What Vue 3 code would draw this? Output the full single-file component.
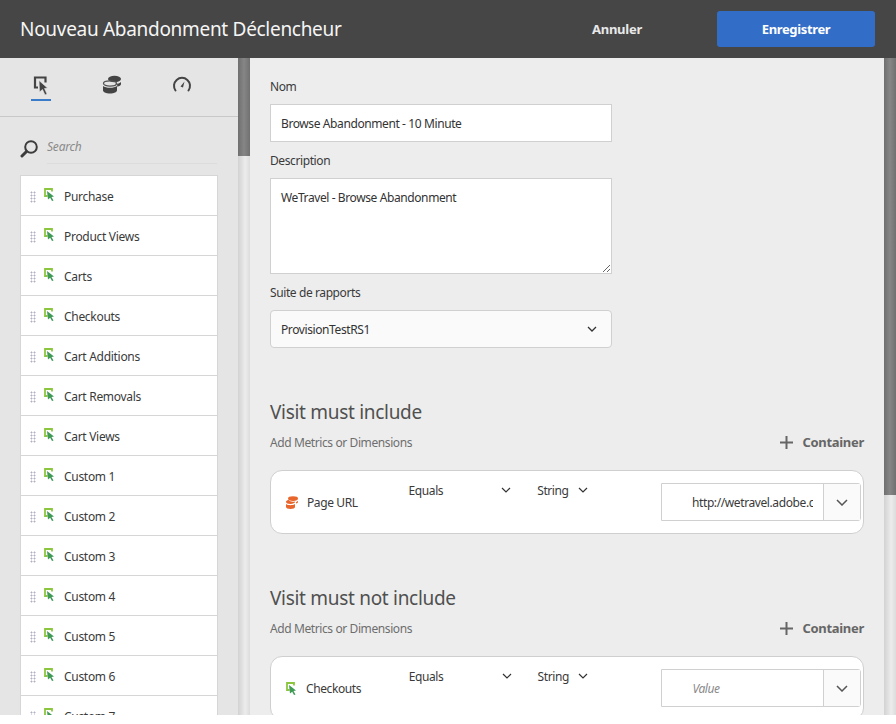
<template>
  <div class="page">
    <header class="topbar">
      <div class="title">Nouveau Abandonment Déclencheur</div>
      <button class="cancel">Annuler</button>
      <button class="save">Enregistrer</button>
    </header>

    <div class="body">
      <aside class="sidebar">
        <div class="tabs">
          <div class="tab active">
            <svg width="20" height="21" viewBox="0 0 20 21">
              <path d="M7 12.500H4V2.500h10.500v5" fill="none" stroke="#444" stroke-width="2.200" />
              <path d="M8 5.500l8.500 7.500-3 .5 2.500 5.500-2 1-2.500-5.500-3 2.500z" fill="#444" stroke="#e5e5e5" stroke-width=".6" />
            </svg>
          </div>
          <div class="tab">
            <svg width="20" height="19" viewBox="0 0 20 19">
              <ellipse cx="12.500" cy="4" rx="6.500" ry="3.200" fill="#444" />
              <path d="M13 8.800c2.700 0 5-.7 6-1.900V9c0 1.300-1.700 2.300-3.800 2.700V9.500z" fill="#444" />
              <ellipse cx="8" cy="8.500" rx="6.500" ry="2.600" fill="none" stroke="#555" stroke-width="1.300" />
              <path d="M1 11c1.500 1.200 4 1.800 7 1.800s5.500-.6 7-1.800v4.200c0 1.900-3 3.300-7 3.300s-7-1.400-7-3.300z" fill="#444" />
            </svg>
          </div>
          <div class="tab">
            <svg width="20" height="18" viewBox="0 0 20 18">
              <path d="M3.500 15.500a8 8 0 1 1 13 0" fill="none" stroke="#444" stroke-width="2" stroke-linecap="round" />
              <path d="M8.500 11.500l4-5-1.500 6z" fill="#444" />
            </svg>
          </div>
        </div>

        <div class="search">
          <svg class="search-icon" width="19" height="19" viewBox="0 0 19 19">
            <circle cx="11" cy="8" r="5.800" fill="none" stroke="#3c3c3c" stroke-width="2" />
            <path d="M6.500 12.500L2 17" stroke="#3c3c3c" stroke-width="3" stroke-linecap="round" />
          </svg>
          <div class="search-field">Search</div>
        </div>

        <ul class="metric-list">
          <li v-for="item in metrics" :key="item" class="metric">
            <span class="grip"></span>
            <svg class="metric-icon" width="11" height="13" viewBox="0 0 11 13">
              <path d="M3.500 8H1V1h7v2.500" fill="none" stroke="#8cc63f" stroke-width="1.800" />
              <path d="M3 3l7 5.500-2.500.5 2 3.500-1.500.5-1.800-3.300L4 11.500z" fill="#3f9a55" />
            </svg>
            <span>{{ item }}</span>
          </li>
        </ul>
      </aside>

      <div class="scrollbar side-scroll"><div class="thumb"></div></div>

      <main class="content">
        <label class="field-label">Nom</label>
        <input class="field" value="Browse Abandonment - 10 Minute" />
        <label class="field-label">Description</label>
        <textarea class="field area">WeTravel - Browse Abandonment</textarea>
        <label class="field-label">Suite de rapports</label>
        <div class="field picker">
          <span>ProvisionTestRS1</span>
          <svg width="10" height="6" viewBox="0 0 10 6"><path d="M1 1l4 4 4-4" fill="none" stroke="#333" stroke-width="1.300" /></svg>
        </div>

        <section v-for="block in blocks" :key="block.title" class="rule">
          <h2>{{ block.title }}</h2>
          <div class="rule-sub">
            <span>Add Metrics or Dimensions</span>
            <span class="add-container">
              <svg width="13" height="13" viewBox="0 0 13 13"><path d="M6.500 0v13M0 6.500h13" stroke="#666" stroke-width="2" /></svg>
              Container
            </span>
          </div>
          <div class="rule-card">
            <div class="rule-name">
              <svg v-if="block.kind === 'dimension'" class="rule-icon" width="12" height="13" viewBox="0 0 12 13">
                <ellipse cx="7" cy="2.600" rx="5" ry="2.400" fill="#e8662c" />
                <path d="M0 6c0-1 1-1.800 2.500-2.300.8 1.200 2.500 2 4.500 2 .6 0 1.200-.1 1.700-.2.200.2.300.4.300.6C9 7.100 7 8 4.500 8S0 7.100 0 6z" fill="#e8662c" />
                <path d="M0 8c1 .8 2.700 1.200 4.500 1.200S8 8.800 9 8v3c0 1.100-2 2-4.500 2S0 12.100 0 11z" fill="#e8662c" />
                <path d="M10 7.600c1.200-.3 2-.8 2-1.600V4.800c-.5.700-1.200 1.100-2 1.400z" fill="#e8662c" />
              </svg>
              <svg v-else class="rule-icon" width="11" height="13" viewBox="0 0 11 13">
                <path d="M3.500 8H1V1h7v2.500" fill="none" stroke="#8cc63f" stroke-width="1.800" />
                <path d="M3 3l7 5.500-2.500.5 2 3.500-1.500.5-1.800-3.300L4 11.500z" fill="#3f9a55" />
              </svg>
              <span>{{ block.name }}</span>
            </div>
            <div class="rule-op op-equals">
              <span>Equals</span>
              <svg width="10" height="6" viewBox="0 0 10 6"><path d="M1 1l4 4 4-4" fill="none" stroke="#333" stroke-width="1.200" /></svg>
            </div>
            <div class="rule-op op-string">
              <span>String</span>
              <svg width="10" height="6" viewBox="0 0 10 6"><path d="M1 1l4 4 4-4" fill="none" stroke="#333" stroke-width="1.200" /></svg>
            </div>
            <div class="combo">
              <div class="combo-value" :class="{ placeholder: !block.value }">{{ block.value || 'Value' }}</div>
              <div class="combo-btn">
                <svg width="12" height="7" viewBox="0 0 12 7"><path d="M1 1l5 5 5-5" fill="none" stroke="#555" stroke-width="1.500" /></svg>
              </div>
            </div>
          </div>
        </section>
      </main>

      <div class="scrollbar main-scroll"><div class="thumb"></div></div>
    </div>
  </div>
</template>

<script setup>
const metrics = [
  'Purchase',
  'Product Views',
  'Carts',
  'Checkouts',
  'Cart Additions',
  'Cart Removals',
  'Cart Views',
  'Custom 1',
  'Custom 2',
  'Custom 3',
  'Custom 4',
  'Custom 5',
  'Custom 6',
  'Custom 7'
]

const blocks = [
  { title: 'Visit must include', kind: 'dimension', name: 'Page URL', value: 'http://wetravel.adobe.com' },
  { title: 'Visit must not include', kind: 'metric', name: 'Checkouts', value: '' }
]
</script>

<style>
html,
body {
  background: #fff;
}
</style>

<style scoped>
.page {
  height: 715px;
  display: flex;
  flex-direction: column;
  overflow: hidden;
  font-family: "Noto Sans", "Open Sans", sans-serif;
  font-size: 12px;
  letter-spacing: -0.4px;
  color: #3a3a3a;
}

.topbar {
  height: 58px;
  flex: none;
  display: flex;
  align-items: center;
  background: #464646;
  padding: 0 21px 0 20px;
}

.title {
  flex: 1;
  font-size: 19px;
  letter-spacing: -0.3px;
  color: #f5f5f5;
}

.cancel {
  background: none;
  border: none;
  font: inherit;
  font-weight: 700;
  font-size: 13px;
  letter-spacing: -0.25px;
  color: #e8e8e8;
  margin-right: 75px;
  padding: 0;
}

.save {
  width: 158px;
  height: 36px;
  background: #326ec8;
  border: none;
  border-radius: 3px;
  font: inherit;
  font-weight: 700;
  font-size: 13px;
  letter-spacing: -0.35px;
  color: #fff;
  padding: 0;
}

.body {
  flex: 1;
  min-height: 0;
  display: flex;
}

.sidebar {
  width: 238px;
  flex: none;
  background: #e5e5e5;
  overflow: hidden;
}

.tabs {
  height: 59px;
  display: flex;
  justify-content: space-between;
  padding: 17px 46px 0 31px;
  box-sizing: border-box;
  border-bottom: 1px solid #c8c8c8;
}

.tab {
  width: 20px;
  height: 24px;
  display: flex;
  justify-content: center;
  align-items: flex-start;
  border-bottom: 2px solid transparent;
}

.tab.active {
  border-bottom-color: #3a7cc9;
}

.search {
  display: flex;
  align-items: center;
  gap: 8px;
  margin: 16px 21px 11px 20px;
}

.search-field {
  flex: 1;
  height: 30px;
  line-height: 28px;
  border-bottom: 1px solid #dcdcdc;
  font-style: italic;
  letter-spacing: -0.2px;
  color: #8a8a8a;
}

.metric-list {
  list-style: none;
  margin: 0 20px 0 20px;
  padding: 0;
  background: #fff;
  border: 1px solid #d6d6d6;
  letter-spacing: -0.3px;
}

.metric {
  height: 39px;
  box-sizing: content-box;
  display: flex;
  align-items: center;
  border-bottom: 1px solid #d6d6d6;
  color: #3a3a3a;
}

.metric > span:last-child {
  margin-top: 2px;
}

.grip {
  width: 6px;
  height: 12px;
  margin-top: 2px;
  margin-left: 9px;
  margin-right: 8px;
  background-image: radial-gradient(circle, #b0b0c4 0.9px, transparent 1.1px);
  background-size: 3px 3px;
}

.metric-icon {
  margin-right: 9px;
  margin-top: -3px;
}

.scrollbar {
  width: 12px;
  flex: none;
  background: linear-gradient(to right, #d2d2d2, #ececec 60%, #dcdcdc);
}

.side-scroll .thumb {
  height: 98px;
  background: linear-gradient(to right, #6f6f6f, #868686 50%, #707070);
}

.main-scroll .thumb {
  height: 437px;
  background: linear-gradient(to right, #6f6f6f, #868686 50%, #707070);
}

.content {
  flex: 1;
  min-width: 0;
  background: #ededed;
  padding: 20px 20px 0;
  overflow: hidden;
}

.field-label {
  display: block;
  height: 18px;
  line-height: 18px;
}

.field {
  display: block;
  box-sizing: border-box;
  width: 342px;
  height: 38px;
  margin: 8px 0 10px;
  padding: 0 10px;
  background: #fff;
  border: 1px solid #d0d0d0;
  font: inherit;
  letter-spacing: inherit;
  color: #333;
  outline: none;
}

.area {
  height: 96px;
  padding: 10px;
  line-height: 18px;
}

.picker {
  display: flex;
  align-items: center;
  justify-content: space-between;
  background: #fafafa;
  border-radius: 4px;
  padding-right: 14px;
}

.rule {
  width: 594px;
  margin-top: 50px;
}

.rule + .rule {
  margin-top: 50px;
}

h2 {
  margin: 0;
  font-size: 19px;
  font-weight: 400;
  letter-spacing: -0.3px;
  line-height: 28px;
  color: #505050;
}

.rule-sub {
  display: flex;
  justify-content: space-between;
  align-items: center;
  height: 30px;
  box-sizing: border-box;
  padding-top: 2px;
  margin-bottom: 14px;
  color: #6e6e6e;
}

.add-container {
  display: flex;
  align-items: center;
  gap: 9px;
  font-weight: 700;
  font-size: 13px;
  letter-spacing: -0.3px;
  color: #666;
}

.rule-card {
  height: 64px;
  box-sizing: border-box;
  display: flex;
  background: #fff;
  border: 1px solid #cfcfcf;
  border-radius: 12px;
  padding: 0 2px 0 15px;
}

.rule-name {
  width: 123px;
  display: flex;
  align-items: center;
  gap: 9px;
  margin-top: 1px;
}

.rule-op {
  display: flex;
  align-items: flex-start;
  justify-content: space-between;
  padding-top: 11px;
  height: 20px;
  line-height: 18px;
}

.rule-op svg {
  margin-top: 5px;
}

.op-equals {
  width: 103px;
  margin-right: 26px;
}

.op-string {
  width: 51px;
  margin-right: 73px;
}

.combo {
  width: 200px;
  height: 38px;
  margin-top: 12px;
  box-sizing: border-box;
  display: flex;
  border: 1px solid #d0d0d0;
  border-radius: 0 3px 3px 0;
}

.combo-value {
  flex: 1;
  min-width: 0;
  line-height: 38px;
  margin-right: 10px;
  padding-left: 30px;
  overflow: hidden;
  white-space: nowrap;
}

.combo-value.placeholder {
  font-style: italic;
  color: #8a8a8a;
}

.combo-btn {
  width: 36px;
  display: flex;
  align-items: center;
  justify-content: center;
  border-left: 1px solid #d0d0d0;
  background: #fafafa;
}
</style>
